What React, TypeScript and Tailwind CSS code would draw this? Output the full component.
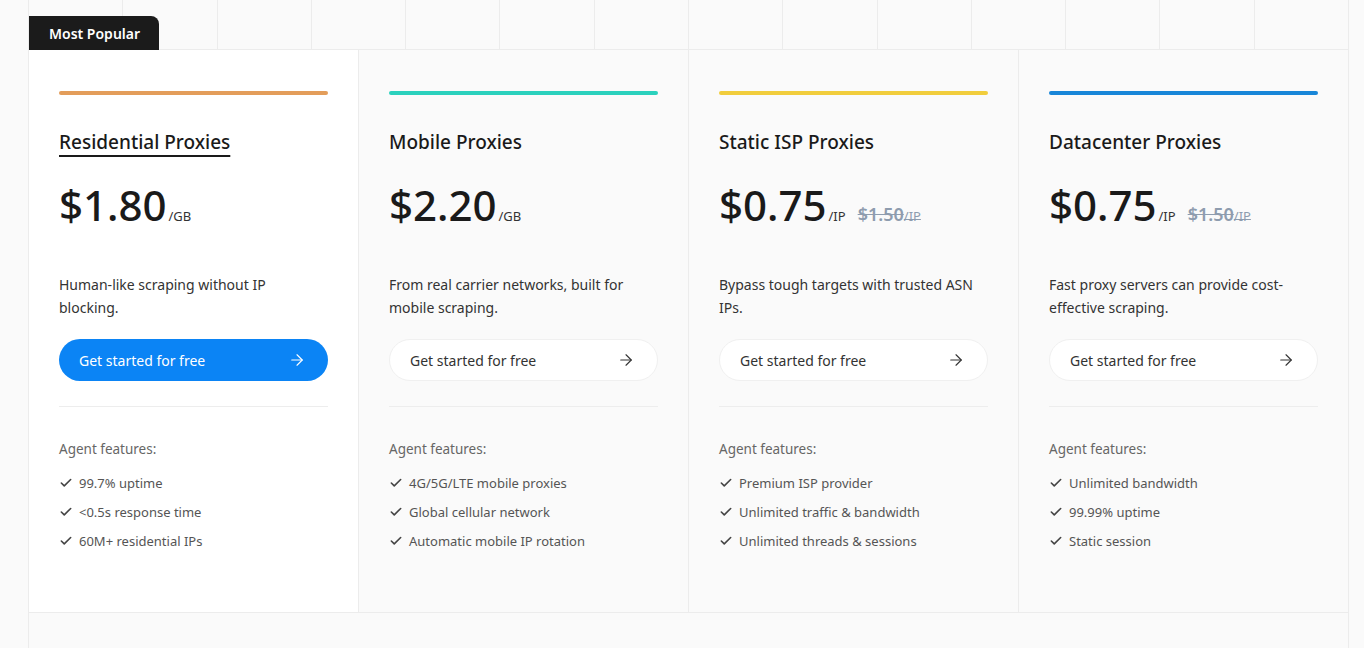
import React from "react";
import { ArrowRight, Check } from "lucide-react";

type Plan = {
  name: string;
  bar: string;
  price: string;
  unit: string;
  oldPrice?: string;
  desc: string;
  features: string[];
  popular?: boolean;
};

const plans: Plan[] = [
  {
    name: "Residential Proxies",
    bar: "bg-[#e39d5a]",
    price: "$1.80",
    unit: "/GB",
    desc: "Human-like scraping without IP blocking.",
    features: ["99.7% uptime", "<0.5s response time", "60M+ residential IPs"],
    popular: true,
  },
  {
    name: "Mobile Proxies",
    bar: "bg-[#2bd1bd]",
    price: "$2.20",
    unit: "/GB",
    desc: "From real carrier networks, built for mobile scraping.",
    features: ["4G/5G/LTE mobile proxies", "Global cellular network", "Automatic mobile IP rotation"],
  },
  {
    name: "Static ISP Proxies",
    bar: "bg-[#f1cd3c]",
    price: "$0.75",
    unit: "/IP",
    oldPrice: "$1.50",
    desc: "Bypass tough targets with trusted ASN IPs.",
    features: ["Premium ISP provider", "Unlimited traffic & bandwidth", "Unlimited threads & sessions"],
  },
  {
    name: "Datacenter Proxies",
    bar: "bg-[#1886d8]",
    price: "$0.75",
    unit: "/IP",
    oldPrice: "$1.50",
    desc: "Fast proxy servers can provide cost-effective scraping.",
    features: ["Unlimited bandwidth", "99.99% uptime", "Static session"],
  },
];

const PlanCard = ({ plan }: { plan: Plan }) => (
  <div
    className={`flex flex-col border-r border-[#ececec] px-[30px] pt-[41px] ${
      plan.popular ? "bg-white" : "bg-[#fafafa]"
    }`}
  >
    <div className={`h-1 w-full rounded-full ${plan.bar}`} />
    <h3
      className={`mt-[33px] text-[19px] leading-7 font-medium text-[#1a1a1a] ${
        plan.popular ? "underline underline-offset-[6px] decoration-2" : ""
      }`}
    >
      {plan.name}
    </h3>
    <div className="mt-[25px] flex items-baseline h-12">
      <span className="text-[42px] leading-[48px] font-medium text-[#1a1a1a]">{plan.price}</span>
      <span className="ml-0.5 text-[13px] text-[#333]">{plan.unit}</span>
      {plan.oldPrice && (
        <span className="ml-3 text-[18px] font-semibold text-[#8e9cae] line-through">
          {plan.oldPrice}
          <span className="text-[13px] font-normal">/IP</span>
        </span>
      )}
    </div>
    <p className="mt-[44px] h-[46px] text-[14px] leading-[23px] text-[#333]">{plan.desc}</p>
    <button
      className={`mt-5 flex h-[42px] w-full items-center justify-between rounded-full pl-5 pr-[22px] text-[14px] ${
        plan.popular
          ? "bg-[#0b84f5] text-white"
          : "border border-[#f0f0f0] bg-white text-[#333]"
      }`}
    >
      <span>Get started for free</span>
      <ArrowRight size={18} strokeWidth={1.5} />
    </button>
    <div className="mt-[25px] h-px w-full bg-[#ededed]" />
    <p className="mt-8 text-[13.5px] leading-5 text-[#666]">Agent features:</p>
    <ul className="mt-[14px] flex flex-col gap-[9px]">
      {plan.features.map((f) => (
        <li key={f} className="flex items-center gap-1.5 text-[13px] leading-5 text-[#555]">
          <Check size={14} strokeWidth={2.75} className="text-[#444]" />
          {f}
        </li>
      ))}
    </ul>
  </div>
);

export default function App() {
  return (
    <div className="min-h-screen bg-[#fafafa] font-['Noto_Sans',sans-serif]">
      <div className="ml-[28px] w-[1321px] border-l border-[#ececec]">
        {/* grid strip */}
        <div className="relative grid h-[50px] grid-cols-14 border-b border-[#ececec]">
          {Array.from({ length: 14 }).map((_, i) => (
            <div key={i} className="border-r border-[#ececec]" />
          ))}
          <div className="absolute bottom-[-1px] left-0 flex h-[34px] w-[130px] items-center rounded-tr-lg bg-[#1b1b1b] pl-5 text-[14px] font-semibold text-white">
            Most Popular
          </div>
        </div>

        <div className="grid h-[563px] grid-cols-4 border-b border-[#ececec]">
          {plans.map((p) => (
            <PlanCard key={p.name} plan={p} />
          ))}
        </div>

        <div className="h-[35px] border-r border-[#ececec]" />
      </div>
    </div>
  );
}
